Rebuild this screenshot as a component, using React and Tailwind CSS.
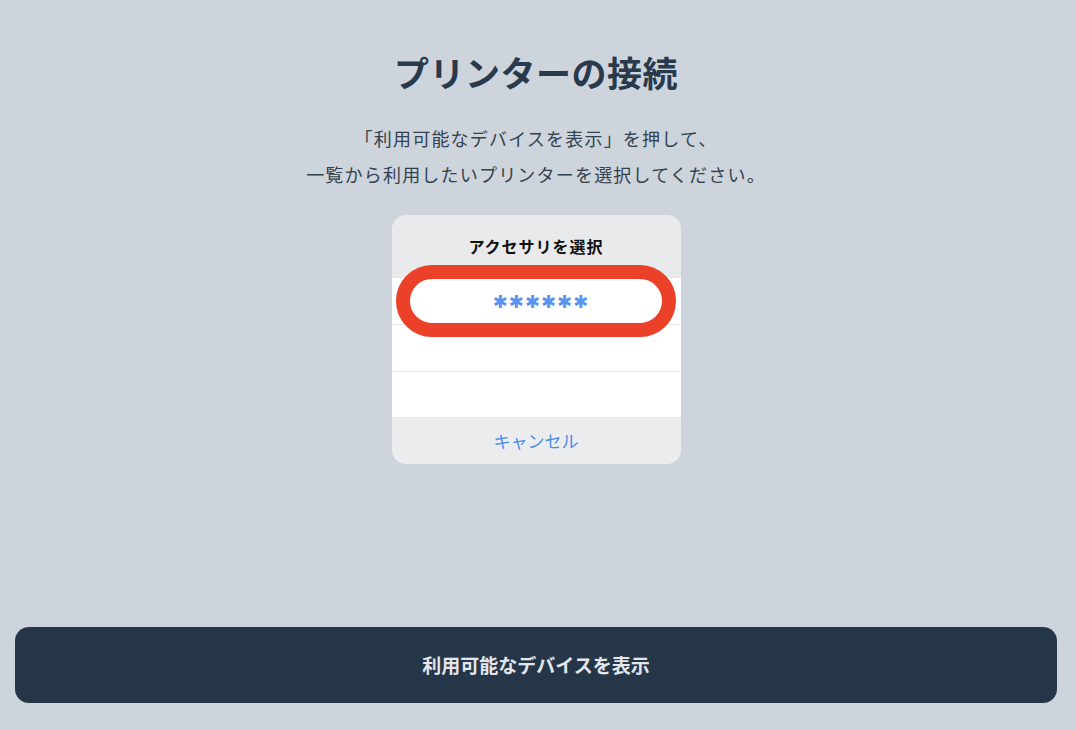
import React from 'react';

const jp = { fontFamily: '"Noto Sans CJK JP", "Noto Sans", sans-serif' };

function AccessorySheet() {
  return (
    <div className="relative w-[289px]">
      <div className="rounded-[14px] overflow-hidden">
        <div className="h-[62px] bg-[#e9eaec] flex items-center justify-center">
          <span className="text-[16px] font-bold text-[#111] tracking-[1px]">アクセサリを選択</span>
        </div>
        <div className="bg-white">
          <div className="h-[47px] border-t border-[#e3e4e6] flex items-center justify-center">
            <span className="font-['DejaVu_Sans',sans-serif] text-[18px] font-bold text-[#5b93ee] tracking-[1px] pl-[10px]">✱✱✱✱✱✱</span>
          </div>
          <div className="h-[47px] border-t border-[#e3e4e6]" />
          <div className="h-[46px] border-t border-[#e3e4e6]" />
        </div>
        <div className="h-[47px] bg-[#ebecee] flex items-center justify-center">
          <span className="text-[17px] text-[#4a8be8]">キャンセル</span>
        </div>
      </div>
      {/* red highlight ring around the first device row */}
      <div className="absolute left-[4px] right-[5px] top-[50px] h-[72px] rounded-full border-[14px] border-[#ea4128]" />
    </div>
  );
}

export default function App() {
  return (
    <div className="w-full h-[730px] bg-[#cdd4dc] flex flex-col items-center pr-[4px]" style={jp}>
      <h1 className="mt-[48px] text-[35px] leading-[48px] font-bold text-[#293a4c] tracking-[0.5px]">プリンターの接続</h1>
      <div className="mt-[24px] text-center text-[18px] leading-[36px] text-[#33424f] tracking-[1.2px]">
        <p>「利用可能なデバイスを表示」を押して、</p>
        <p>一覧から利用したいプリンターを選択してください。</p>
      </div>
      <div className="mt-[23px]">
        <AccessorySheet />
      </div>
      <button className="mt-auto mb-[27px] w-[1042px] h-[76px] rounded-[14px] bg-[#263649] text-[#e3e6ea] text-[19px] font-bold">
        利用可能なデバイスを表示
      </button>
    </div>
  );
}
